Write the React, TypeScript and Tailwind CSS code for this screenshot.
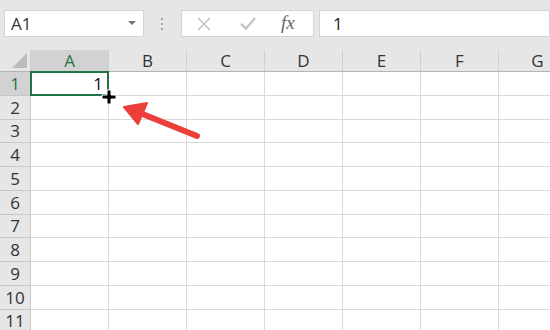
const COLS = ['A', 'B', 'C', 'D', 'E', 'F', 'G'];
const ROW_HEIGHTS = [24, 24, 23, 24, 24, 24, 23, 24, 24, 24, 23];

const font = { fontFamily: '"Open Sans", "Liberation Sans", sans-serif' };

function FormulaBar() {
  return (
    <div className="flex h-[50px] items-center bg-[#e6e6e6] pb-[3px]">
      <div className="ml-[4px] flex h-[27px] w-[140px] items-center justify-between border border-[#d4d4d4] bg-white pl-[6px] pr-[7px]">
        <span className="text-[17px] text-[#333]">A1</span>
        <svg width="8" height="5" viewBox="0 0 8 5">
          <path d="M0 0 L8 0 L4 4 Z" fill="#777" />
        </svg>
      </div>
      <div className="ml-[16px] flex w-[4px] flex-col items-center gap-[3px]">
        <span className="h-[2px] w-[2px] bg-[#a0a0a0]" />
        <span className="h-[2px] w-[2px] bg-[#a0a0a0]" />
        <span className="h-[2px] w-[2px] bg-[#a0a0a0]" />
      </div>
      <div className="ml-[17px] flex h-[27px] w-[133px] items-center border border-[#d4d4d4] bg-white">
        <svg className="ml-[15px]" width="14" height="14" viewBox="0 0 14 14">
          <path d="M1 1 L13 13 M13 1 L1 13" stroke="#c2c2c2" strokeWidth="1.6" />
        </svg>
        <svg className="ml-[29px]" width="16" height="13" viewBox="0 0 16 13">
          <path d="M1 7 L6 11.5 L15 1" stroke="#c2c2c2" strokeWidth="2.4" fill="none" />
        </svg>
        <span
          className="ml-[25px] text-[19px] italic text-[#666]"
          style={{ fontFamily: '"Liberation Serif", serif' }}
        >
          fx
        </span>
      </div>
      <div className="ml-[5px] flex h-[27px] flex-1 items-center border border-[#d4d4d4] bg-white pl-[13px]">
        <span className="text-[17px] text-[#222]">1</span>
      </div>
    </div>
  );
}

function ColumnHeaders() {
  return (
    <div className="flex h-[22px] border-b border-[#b4b4b4] bg-[#e6e6e6]">
      <div className="relative w-[31px] shrink-0 border-r border-[#d0d0d0]">
        <svg className="absolute bottom-[3px] right-[3px]" width="15" height="15" viewBox="0 0 15 15">
          <path d="M15 0 L15 15 L0 15 Z" fill="#bcbcbc" />
        </svg>
      </div>
      {COLS.map((c, i) => (
        <div
          key={c}
          className={
            'flex w-[78px] shrink-0 items-center justify-center border-r border-[#d0d0d0] text-[17px] ' +
            (i === 0 ? 'bg-[#d2d2d2] text-[#217346]' : 'text-[#333]')
          }
        >
          {c}
        </div>
      ))}
    </div>
  );
}

function GridRow({ n, h }: { n: number; h: number }) {
  const selected = n === 1;
  return (
    <div className="flex" style={{ height: h }}>
      <div
        className={
          'flex w-[31px] shrink-0 items-center justify-center border-b border-r border-[#c8c8c8] text-[17px] ' +
          (selected ? 'bg-[#d2d2d2] text-[#217346]' : 'bg-[#e6e6e6] text-[#333]')
        }
      >
        {n}
      </div>
      {COLS.map((c) => (
        <div key={c} className="relative w-[78px] shrink-0 border-b border-r border-[#dadada] bg-white">
          {selected && c === 'A' && (
            <div className="absolute -left-px -top-px bottom-[-1px] right-[-1px] flex items-center justify-end border-2 border-[#217346] pr-[4px] text-[17px] text-[#111]">
              1
            </div>
          )}
        </div>
      ))}
    </div>
  );
}

export default function App() {
  return (
    <div className="relative h-[330px] w-[550px] overflow-hidden bg-white" style={font}>
      <FormulaBar />
      <ColumnHeaders />
      {ROW_HEIGHTS.map((h, i) => (
        <GridRow key={i} n={i + 1} h={h} />
      ))}

      {/* fill handle cursor */}
      <svg className="absolute left-[101px] top-[89px]" width="16" height="16" viewBox="0 0 16 16">
        <path d="M6 1 H10 V6 H15 V10 H10 V15 H6 V10 H1 V6 H6 Z" fill="#000" stroke="#fff" strokeWidth="1" />
      </svg>

      {/* red arrow */}
      <svg className="absolute left-[118px] top-[98px]" width="90" height="50" viewBox="0 0 90 50">
        <path d="M79 38 L22 15" stroke="#ec3f3a" strokeWidth="6" strokeLinecap="round" />
        <path d="M6 9 L29 5 L20 26 Z" fill="#ec3f3a" stroke="#ec3f3a" strokeWidth="2" strokeLinejoin="round" />
      </svg>
    </div>
  );
}
